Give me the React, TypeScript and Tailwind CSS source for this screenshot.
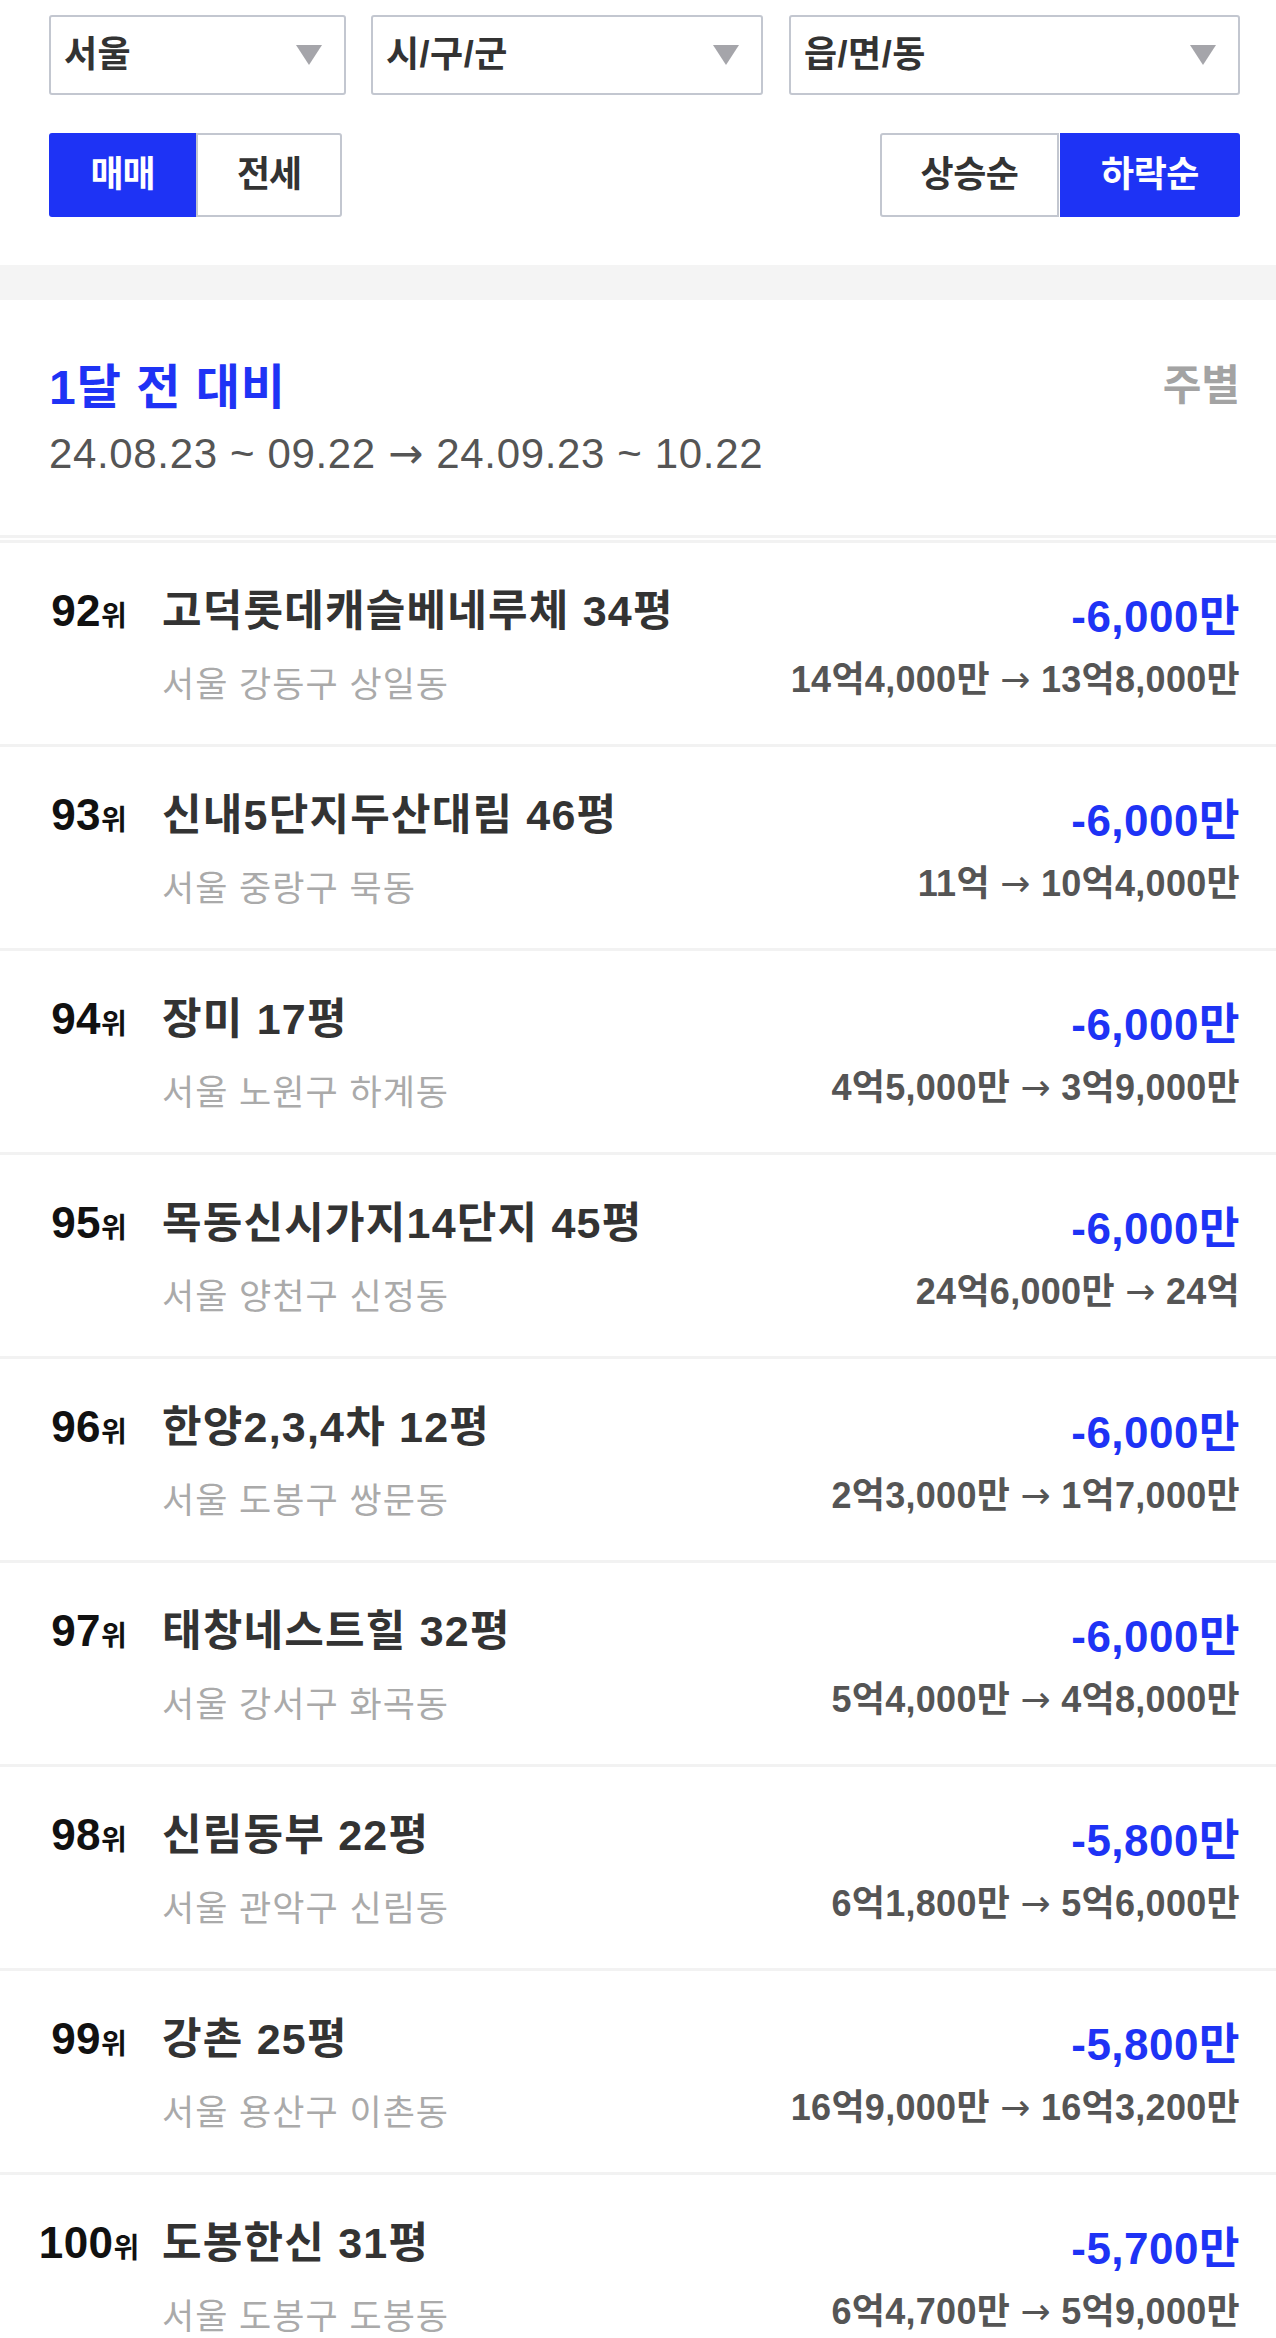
import React from "react";

const rows = [
  { rank: 92, name: "고덕롯데캐슬베네루체 34평", addr: "서울 강동구 상일동", diff: "-6,000만", from: "14억4,000만", to: "13억8,000만" },
  { rank: 93, name: "신내5단지두산대림 46평", addr: "서울 중랑구 묵동", diff: "-6,000만", from: "11억", to: "10억4,000만" },
  { rank: 94, name: "장미 17평", addr: "서울 노원구 하계동", diff: "-6,000만", from: "4억5,000만", to: "3억9,000만" },
  { rank: 95, name: "목동신시가지14단지 45평", addr: "서울 양천구 신정동", diff: "-6,000만", from: "24억6,000만", to: "24억" },
  { rank: 96, name: "한양2,3,4차 12평", addr: "서울 도봉구 쌍문동", diff: "-6,000만", from: "2억3,000만", to: "1억7,000만" },
  { rank: 97, name: "태창네스트힐 32평", addr: "서울 강서구 화곡동", diff: "-6,000만", from: "5억4,000만", to: "4억8,000만" },
  { rank: 98, name: "신림동부 22평", addr: "서울 관악구 신림동", diff: "-5,800만", from: "6억1,800만", to: "5억6,000만" },
  { rank: 99, name: "강촌 25평", addr: "서울 용산구 이촌동", diff: "-5,800만", from: "16억9,000만", to: "16억3,200만" },
  { rank: 100, name: "도봉한신 31평", addr: "서울 도봉구 도봉동", diff: "-5,700만", from: "6억4,700만", to: "5억9,000만" },
];

function Caret() {
  return (
    <svg width="26" height="20" viewBox="0 0 26 20" className="shrink-0">
      <polygon points="0,0 26,0 13,20" fill="#a5a5aa" />
    </svg>
  );
}

function Arrow() {
  return <span style={{ fontFamily: '"DejaVu Sans", sans-serif' }} className="font-normal">→</span>;
}

function Select({ label, className }: { label: string; className: string }) {
  return (
    <div
      className={`h-[80px] border-2 border-[#c3c7d0] rounded-[3px] flex items-center justify-between pl-[13px] pr-[22px] ${className}`}
    >
      <span className="text-[36px] font-bold text-[#333] tracking-[0.5px] leading-none">{label}</span>
      <Caret />
    </div>
  );
}

export default function App() {
  return (
    <div
      className="w-[1276px] bg-white"
      style={{ fontFamily: '"Liberation Sans", "Noto Sans CJK KR", sans-serif' }}
    >
      <div className="pt-[15px] pl-[49px] pr-[36px] pb-[48px]">
        <div className="flex">
          <Select label="서울" className="w-[297px]" />
          <Select label="시/구/군" className="w-[392px] ml-[25px]" />
          <Select label="읍/면/동" className="flex-1 ml-[26px]" />
        </div>
        <div className="mt-[38px] h-[84px] flex justify-between">
          <div className="flex">
            <div className="w-[147px] h-full bg-[#1e33f5] rounded-l-[3px] flex items-center justify-center text-white text-[36px] font-bold tracking-[-1px]">
              매매
            </div>
            <div className="w-[146px] h-full border-2 border-[#c3c7d0] rounded-r-[3px] flex items-center justify-center text-[#333] text-[36px] font-bold tracking-[-1px]">
              전세
            </div>
          </div>
          <div className="flex">
            <div className="w-[179px] h-full border-2 border-[#c3c7d0] rounded-l-[3px] flex items-center justify-center text-[#333] text-[36px] font-bold tracking-[-0.5px]">
              상승순
            </div>
            <div className="w-[180px] ml-[1px] h-full bg-[#1e33f5] rounded-r-[3px] flex items-center justify-center text-white text-[36px] font-bold tracking-[-0.5px]">
              하락순
            </div>
          </div>
        </div>
      </div>

      <div className="h-[35px] bg-[#f4f4f4]" />

      <section className="pl-[49px] pr-[36px] pt-[58px] pb-[57px] flex justify-between items-start">
        <div>
          <div className="text-[48px] font-bold leading-[60px] text-[#1e33f5] tracking-[1px]">1달 전 대비</div>
          <div className="mt-[12px] text-[42px] leading-[48px] text-[#555] tracking-[0.65px] whitespace-nowrap">
            24.08.23 ~ 09.22 <Arrow /> 24.09.23 ~ 10.22
          </div>
        </div>
        <div className="text-[42px] font-bold leading-[56px] text-[#a3a3a3]">주별</div>
      </section>

      <div className="h-[3px] bg-[#f2f2f2]" />
      <div className="h-[2px]" />
      <div className="h-[3px] bg-[#f2f2f2]" />

      {rows.map((r) => (
        <div
          key={r.rank}
          className="h-[204px] border-b-[3px] border-[#f2f2f2] flex justify-between pl-[49px] pr-[36px]"
        >
          <div className="flex flex-col pt-[40px]">
            <div className="flex items-baseline">
              <div className="w-[80px] flex justify-center items-baseline whitespace-nowrap text-[#111] font-bold">
                <span className="text-[44px] leading-[56px] tracking-[0.5px]">{r.rank}</span>
                <span className="text-[28px] leading-[56px]">위</span>
              </div>
              <div className="ml-[33px] text-[43px] font-bold leading-[56px] tracking-[1.2px] text-[#333] whitespace-nowrap">
                {r.name}
              </div>
            </div>
            <div className="ml-[113px] mt-[16px] text-[35px] leading-[48px] text-[#aaaaaa] tracking-[1px] whitespace-nowrap">
              {r.addr}
            </div>
          </div>
          <div className="flex flex-col items-end pt-[46px]">
            <div className="text-[44px] font-bold leading-[56px] text-[#1e33f5] tracking-[0.5px] whitespace-nowrap">
              {r.diff}
            </div>
            <div className="mt-[11px] text-[36px] font-bold leading-[48px] text-[#555] tracking-[0.3px] whitespace-nowrap">
              {r.from} <Arrow /> {r.to}
            </div>
          </div>
        </div>
      ))}
    </div>
  );
}
